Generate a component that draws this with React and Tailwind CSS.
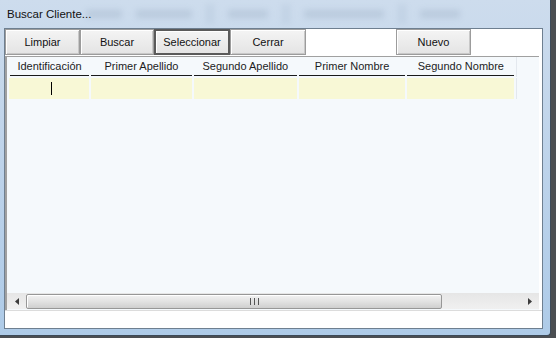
import React from "react";

const cols = [
  { label: "Identificación", w: "w-[80px]" },
  { label: "Primer Apellido", w: "w-[102px]" },
  { label: "Segundo Apellido", w: "w-[104px]" },
  { label: "Primer Nombre", w: "w-[108px]" },
  { label: "Segundo Nombre", w: "w-[108px]" },
];

function Btn({ children, w, focused }) {
  return (
    <div
      className={
        "h-[26px] flex items-center justify-center text-[11px] text-[#111] bg-gradient-to-b from-[#f4f4f4] to-[#e4e4e4] " +
        w +
        (focused
          ? " border-2 border-[#5a5a5a] shadow-[inset_1px_1px_0_#ffffff]"
          : " border border-[#9c9c9c] shadow-[inset_1px_1px_0_#ffffff,inset_-1px_-1px_0_#c8c8c8]")
      }
    >
      {children}
    </div>
  );
}

export default function App() {
  return (
    <div
      className="w-[556px] h-[338px] bg-[#4b4e52] overflow-hidden flex"
      style={{ fontFamily: '"Liberation Sans", Arial, sans-serif' }}
    >
      <div className="w-[551px] h-[336px] shrink-0 bg-gradient-to-b from-[#cddced] via-[#bdd3ea] to-[#aecbe8] border-r border-b border-[#3d4a58] rounded-br-[4px] flex flex-col">
        {/* title bar */}
        <div className="h-[28px] shrink-0 relative flex items-center overflow-hidden">
          <div className="absolute inset-0 flex items-center gap-[14px] pl-[86px] blur-[3px] opacity-30">
            <div className="w-[36px] h-[8px] bg-[#8fa3b8]" />
            <div className="w-[56px] h-[8px] bg-[#8fa3b8]" />
            <div className="w-[8px] h-[20px] bg-[#a9bcd0]" />
            <div className="w-[40px] h-[8px] bg-[#8fa3b8]" />
            <div className="w-[8px] h-[20px] bg-[#a9bcd0]" />
            <div className="w-[80px] h-[8px] bg-[#8fa3b8]" />
            <div className="w-[8px] h-[20px] bg-[#a9bcd0]" />
            <div className="w-[40px] h-[8px] bg-[#8fa3b8]" />
          </div>
          <span className="relative pl-[7px] pt-[1px] text-[11.5px] text-[#111]">Buscar Cliente...</span>
        </div>
        {/* client */}
        <div className="ml-[4px] mr-[7px] h-[301px] bg-white border border-[#6e7f90] flex flex-col">
          <div className="flex">
            <Btn w="w-[75px]">Limpiar</Btn>
            <Btn w="w-[74px]">Buscar</Btn>
            <Btn w="w-[76px]" focused>
              Seleccionar
            </Btn>
            <Btn w="w-[76px]">Cerrar</Btn>
            <div className="w-[90px]" />
            <Btn w="w-[75px]">Nuevo</Btn>
          </div>
          {/* grid */}
          <div className="mt-[1px] mr-[3px] h-[254px] bg-[#f5f9fc] border-l-2 border-t border-[#a0a0a0] flex flex-col">
            <div className="flex flex-col flex-1 pl-[2px]">
              <div className="flex h-[20px] gap-[2px] pl-[1px]">
                {cols.map((c) => (
                  <div
                    key={c.label}
                    className={c.w + " h-[19px] border-b-[1.5px] border-[#1a1a1a] flex items-end justify-center pb-[1px] text-[11px] text-[#1c1c1c]"}
                  >
                    {c.label}
                  </div>
                ))}
                <div className="w-[23px] border-l border-[#e3e8ee]" />
              </div>
              <div className="flex h-[21px] mt-[1px] gap-[2px]">
                {cols.map((c, i) => (
                  <div
                    key={c.label}
                    className={
                      (i === 0 ? "w-[81px] " : c.w + " ") +
                      "h-[21px] bg-[#f8f8d6] flex items-center"
                    }
                  >
                    {i === 0 && <div className="ml-[42px] w-[1px] h-[13px] bg-black" />}
                  </div>
                ))}
                <div className="w-[23px] border-l border-[#e3e8ee]" />
              </div>
              <div className="flex-1" />
            </div>
            {/* scrollbar */}
            <div className="h-[16px] mb-[1px] bg-gradient-to-b from-[#e6e6e6] to-[#f0f0f0] flex items-center">
              <div className="w-[19px] flex items-center justify-center">
                <svg width="4" height="7" viewBox="0 0 4 7">
                  <path d="M4 0 L0 3.5 L4 7 Z" fill="#3c3c3c" />
                </svg>
              </div>
              <div className="w-[416px] h-[15px] rounded-[2px] border border-[#979797] bg-gradient-to-b from-[#f2f2f2] via-[#e2e2e2] to-[#cfcfcf] flex items-center justify-center shadow-[inset_1px_1px_0_#ffffff]">
                <div className="ml-[40px] flex gap-[1px]">
                  <div className="w-[1px] h-[7px] bg-[#555]" />
                  <div className="w-[1px] h-[7px] bg-[#ddd]" />
                  <div className="w-[1px] h-[7px] bg-[#555]" />
                  <div className="w-[1px] h-[7px] bg-[#ddd]" />
                  <div className="w-[1px] h-[7px] bg-[#555]" />
                </div>
              </div>
              <div className="flex-1 flex items-center justify-end pr-[7px]">
                <svg width="4" height="7" viewBox="0 0 4 7">
                  <path d="M0 0 L4 3.5 L0 7 Z" fill="#3c3c3c" />
                </svg>
              </div>
            </div>
          </div>
          <div className="border-t border-[#dcdcdc]" />
        </div>
      </div>
    </div>
  );
}
